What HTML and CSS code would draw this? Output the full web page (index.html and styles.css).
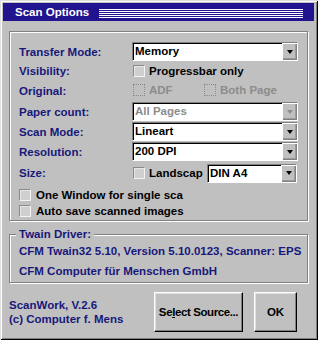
FILE: index.html
```html
<!DOCTYPE html>
<html lang="en">
<head>
    <meta charset="UTF-8">
    <title>Scan Options</title>
    <link rel="stylesheet" href="styles.css">
</head>
<body>
    <div class="window">
        <div class="titlebar">
            <span class="title">Scan Options</span>
            <span class="stripes"></span>
        </div>
        <div class="content">
            <div class="group options">
                <div class="form">
                    <div class="label">Transfer Mode:</div>
                    <div class="combo"><span class="value">Memory</span><span class="drop"><i></i></span></div>

                    <div class="label">Visibility:</div>
                    <div class="field"><span class="check"></span><span class="text">Progressbar only</span></div>

                    <div class="label">Original:</div>
                    <div class="field disabled">
                        <span class="check"></span><span class="text adf">ADF</span>
                        <span class="check"></span><span class="text both">Both Page</span>
                    </div>

                    <div class="label">Paper count:</div>
                    <div class="combo disabled"><span class="value">All Pages</span><span class="drop"><i></i></span></div>

                    <div class="label">Scan Mode:</div>
                    <div class="combo"><span class="value">Lineart</span><span class="drop"><i></i></span></div>

                    <div class="label">Resolution:</div>
                    <div class="combo"><span class="value">200 DPI</span><span class="drop"><i></i></span></div>

                    <div class="label">Size:</div>
                    <div class="field size">
                        <span class="check"></span><span class="text landscape">Landscap</span>
                        <div class="combo small"><span class="value">DIN A4</span><span class="drop"><i></i></span></div>
                    </div>
                </div>
                <div class="checks">
                    <div class="field"><span class="check"></span><span class="text">One Window for single sca</span></div>
                    <div class="field"><span class="check"></span><span class="text">Auto save scanned images</span></div>
                </div>
            </div>

            <div class="group driver">
                <div class="group-title">Twain Driver:</div>
                <div class="info">CFM Twain32 5.10, Version 5.10.0123, Scanner: EPS</div>
                <div class="info">CFM Computer für Menschen GmbH</div>
            </div>

            <div class="footer">
                <div class="about">
                    <div>ScanWork, V.2.6</div>
                    <div>(c) Computer f. Mens</div>
                </div>
                <button class="btn select">Se<u>l</u>ect Source...</button>
                <button class="btn ok">OK</button>
            </div>
        </div>
    </div>
</body>
</html>
```

FILE: styles.css
```css
body {
    margin: 0;
    background: #c0c0c0;
    font-family: "Liberation Sans", Arial, sans-serif;
    font-size: 11.5px;
    font-weight: bold;
}
.window {
    width: 318px;
    height: 340px;
    box-sizing: border-box;
    padding: 3px 4px 3px 3px;
    background: #c0c0c0;
    box-shadow: inset 1px 1px #dfdfdf, inset -1px -1px #000, inset 2px 2px #fff, inset -2px -2px #808080;
}
.titlebar {
    height: 18px;
    background: #22138e;
    display: flex;
    align-items: center;
    padding-left: 12px;
}
.title {
    color: #fff;
    font-size: 11.5px;
}
.stripes {
    flex: 1;
    height: 9px;
    margin: 6px 11px 0 10px;
    align-self: flex-start;
    background: repeating-linear-gradient(#fff 0 1px, transparent 1px 2px);
}
.content {
    padding: 10px 6px 0 6px;
}
.group {
    border: 1px solid #808080;
    box-shadow: 1px 1px 0 #fff, inset 1px 1px 0 #fff;
}
.options {
    padding: 10px 9px 1px 9px;
}
.form {
    display: grid;
    grid-template-columns: 113px 166px;
    grid-template-rows: 20px 18px 22px 20px 20px 20px 21px;
    align-items: center;
}
.label {
    color: #18187a;
}
.form > .combo {
    align-self: start;
}
.combo {
    height: 19px;
    box-sizing: border-box;
    display: flex;
    background: #fff;
    border: 1px solid;
    border-color: #808080 #fff #fff #808080;
    box-shadow: inset 1px 1px #000;
}
.combo .value {
    flex: 1;
    padding: 1px 0 0 2px;
    line-height: 15px;
    color: #000;
    overflow: hidden;
    white-space: nowrap;
}
.drop {
    width: 15px;
    flex: none;
    background: #c0c0c0;
    box-shadow: inset 1px 1px #fff, inset -1px -1px #808080, inset -2px -2px #9a9a9a;
    display: flex;
    align-items: center;
    justify-content: center;
}
.drop i {
    width: 0;
    height: 0;
    border-left: 3px solid transparent;
    border-right: 3px solid transparent;
    border-top: 4px solid #000;
}
.combo.disabled .value {
    color: #8c8c8c;
}
.combo.disabled .drop i {
    border-top-color: #8c8c8c;
}
.field {
    display: flex;
    align-items: center;
    padding-left: 1px;
    white-space: nowrap;
    overflow: hidden;
}
.check {
    width: 12px;
    height: 12px;
    flex: none;
    box-sizing: border-box;
    background: #cfcfcf;
    border: 1px solid;
    border-color: #8a8a8a #f4f4f4 #f4f4f4 #8a8a8a;
    box-shadow: inset 1px 1px #e6e6e6;
}
.text {
    margin-left: 4px;
    color: #000;
}
.field.disabled {
    padding-bottom: 3px;
}
.field.disabled .check {
    background: none;
    border: 1px dotted #8c8c8c;
    box-shadow: none;
}
.field.disabled .text {
    color: #8c8c8c;
}
.adf {
    width: 55px;
}
.both {
    width: 62px;
}
.landscape {
    width: 58px;
}
.combo.small {
    width: 90px;
    margin-top: 1px;
}
.size {
    align-self: start;
    height: 21px;
}
.checks {
    margin-top: 4px;
}
.checks .field {
    height: 16px;
    padding-left: 0;
}
.checks .text {
    margin-left: 5px;
}
.driver {
    margin-top: 13px;
    padding: 0 2px 1px 9px;
}
.group-title {
    display: table;
    margin: -8px 0 0 -3px;
    padding: 0 3px;
    line-height: 14px;
    background: #c0c0c0;
    color: #18187a;
}
.info {
    line-height: 20px;
    color: #18187a;
    white-space: nowrap;
}
.footer {
    display: flex;
    align-items: center;
    margin-top: 9px;
}
.about {
    width: 120px;
    line-height: 14px;
    color: #18187a;
    white-space: nowrap;
}
.btn {
    height: 40px;
    padding: 0;
    font: inherit;
    color: #000;
    background: #c0c0c0;
    border: 1px solid;
    border-color: #fff #000 #000 #fff;
    box-shadow: inset -1px -1px #808080, inset 1px 1px #dfdfdf;
}
.select {
    width: 89px;
    margin-left: 25px;
    letter-spacing: -0.4px;
}
.ok {
    width: 43px;
    margin-left: 11px;
}
```
